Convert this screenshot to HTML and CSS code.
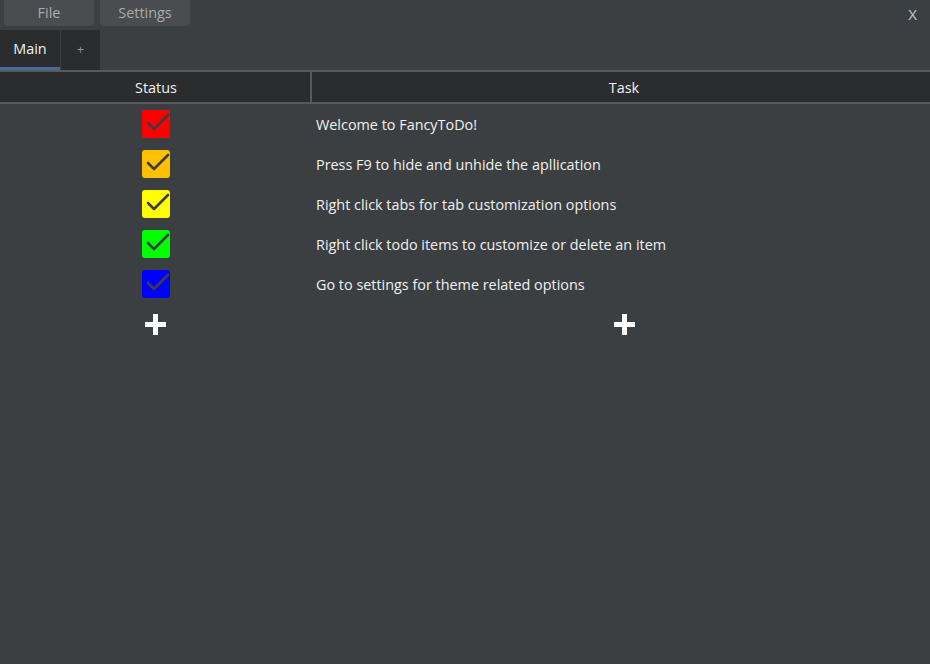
FILE: index.html
```html
<!DOCTYPE html>
<html>
<head>
<meta charset="utf-8">
<link rel="stylesheet" href="styles.css">
</head>
<body>
<div class="app">
  <div class="topbar">
    <div class="menus">
      <div class="menu-btn">File</div>
      <div class="menu-btn">Settings</div>
    </div>
    <div class="close">X</div>
  </div>
  <div class="tabs">
    <div class="tab active">Main</div>
    <div class="tab add">+</div>
  </div>
  <div class="table">
    <div class="head">
      <div class="hcell hstatus">Status</div>
      <div class="hsep"></div>
      <div class="hcell task-col">Task</div>
    </div>
    <div class="rows">
      <div class="row">
        <div class="status-col"><span class="check red"><svg viewBox="0 0 28 28"><path d="M6 13 L12 19 L26 5" /></svg></span></div>
        <div class="task">Welcome to FancyToDo!</div>
      </div>
      <div class="row">
        <div class="status-col"><span class="check orange"><svg viewBox="0 0 28 28"><path d="M6 13 L12 19 L26 5" /></svg></span></div>
        <div class="task">Press F9 to hide and unhide the apllication</div>
      </div>
      <div class="row">
        <div class="status-col"><span class="check yellow"><svg viewBox="0 0 28 28"><path d="M6 13 L12 19 L26 5" /></svg></span></div>
        <div class="task">Right click tabs for tab customization options</div>
      </div>
      <div class="row">
        <div class="status-col"><span class="check green"><svg viewBox="0 0 28 28"><path d="M6 13 L12 19 L26 5" /></svg></span></div>
        <div class="task">Right click todo items to customize or delete an item</div>
      </div>
      <div class="row">
        <div class="status-col"><span class="check blue"><svg viewBox="0 0 28 28"><path d="M6 13 L12 19 L26 5" /></svg></span></div>
        <div class="task">Go to settings for theme related options</div>
      </div>
      <div class="row add-row">
        <div class="status-col"><span class="plus"></span></div>
        <div class="task-center"><span class="plus"></span></div>
      </div>
    </div>
  </div>
</div>
</body>
</html>
```
FILE: styles.css
```css
html, body {
  margin: 0;
  padding: 0;
  background: #3c3f42;
  width: 930px;
  height: 664px;
  overflow: hidden;
  font-family: "Open Sans", "Noto Sans", sans-serif;
}
.app {
  width: 930px;
  height: 664px;
  display: flex;
  flex-direction: column;
}
.topbar {
  height: 30px;
  display: flex;
  justify-content: space-between;
}
.menus {
  display: flex;
  gap: 6px;
  padding-left: 4px;
}
.menu-btn {
  width: 90px;
  height: 26px;
  background: #4a4c4f;
  border-radius: 0 0 4px 4px;
  color: #a9abad;
  font-size: 14.4px;
  line-height: 25px;
  text-align: center;
}
.close {
  color: #b8c0c8;
  font-size: 15px;
  line-height: 29px;
  padding-right: 13px;
  font-family: "Noto Sans", sans-serif;
}
.tabs {
  height: 40px;
  display: flex;
}
.tab {
  background: #2b2c2e;
  height: 40px;
  box-sizing: border-box;
  color: #f0f0f0;
  font-size: 14.4px;
  line-height: 38px;
  text-align: center;
}
.tab.active {
  width: 60px;
  border-bottom: 3px solid #4a6b96;
}
.tab.add {
  width: 39px;
  margin-left: 1px;
  color: #8a9098;
  font-size: 13px;
}
.table {
  border-top: 2px solid #57595c;
  flex: 1;
  display: flex;
  flex-direction: column;
}
.head {
  display: flex;
  height: 30px;
  background: #2b2c2e;
  border-bottom: 2px solid #57595c;
}
.hcell {
  color: #f2f2f2;
  font-size: 14.4px;
  line-height: 32px;
  height: 30px;
  text-align: center;
}
.hstatus {
  width: 310px;
  padding-left: 2px;
  box-sizing: border-box;
}
.status-col {
  width: 310px;
  display: flex;
  justify-content: center;
  align-items: center;
}
.hsep {
  width: 2px;
  background: #57595c;
}
.task-col {
  flex: 1;
  padding-left: 6px;
}
.rows {
  display: flex;
  flex-direction: column;
}
.row {
  display: flex;
  height: 40px;
  align-items: center;
}
.task {
  padding-left: 6px;
  color: #f0f0f0;
  font-size: 14.4px;
}
.check {
  width: 28px;
  height: 28px;
  border-radius: 3px;
  display: block;
  margin-left: 2px;
}
.check svg {
  width: 28px;
  height: 28px;
  display: block;
  overflow: visible;
}
.check path {
  fill: none;
  stroke: #3c3c42;
  stroke-width: 2.6;
  stroke-linecap: round;
  stroke-linejoin: round;
}
.red { background: #ff0000; }
.orange { background: #ffc000; }
.yellow { background: #ffff00; }
.green { background: #00ff00; }
.blue { background: #0000ff; }
.task-center {
  flex: 1;
  display: flex;
  justify-content: center;
  padding-left: 7px;
}
.plus {
  position: relative;
  display: block;
  width: 21px;
  height: 21px;
  margin-left: 1px;
}
.plus::before, .plus::after {
  content: "";
  position: absolute;
  background: #ffffff;
}
.plus::before {
  left: 0;
  right: 0;
  top: 8px;
  height: 5px;
}
.plus::after {
  top: 0;
  bottom: 0;
  left: 8px;
  width: 5px;
}
```
